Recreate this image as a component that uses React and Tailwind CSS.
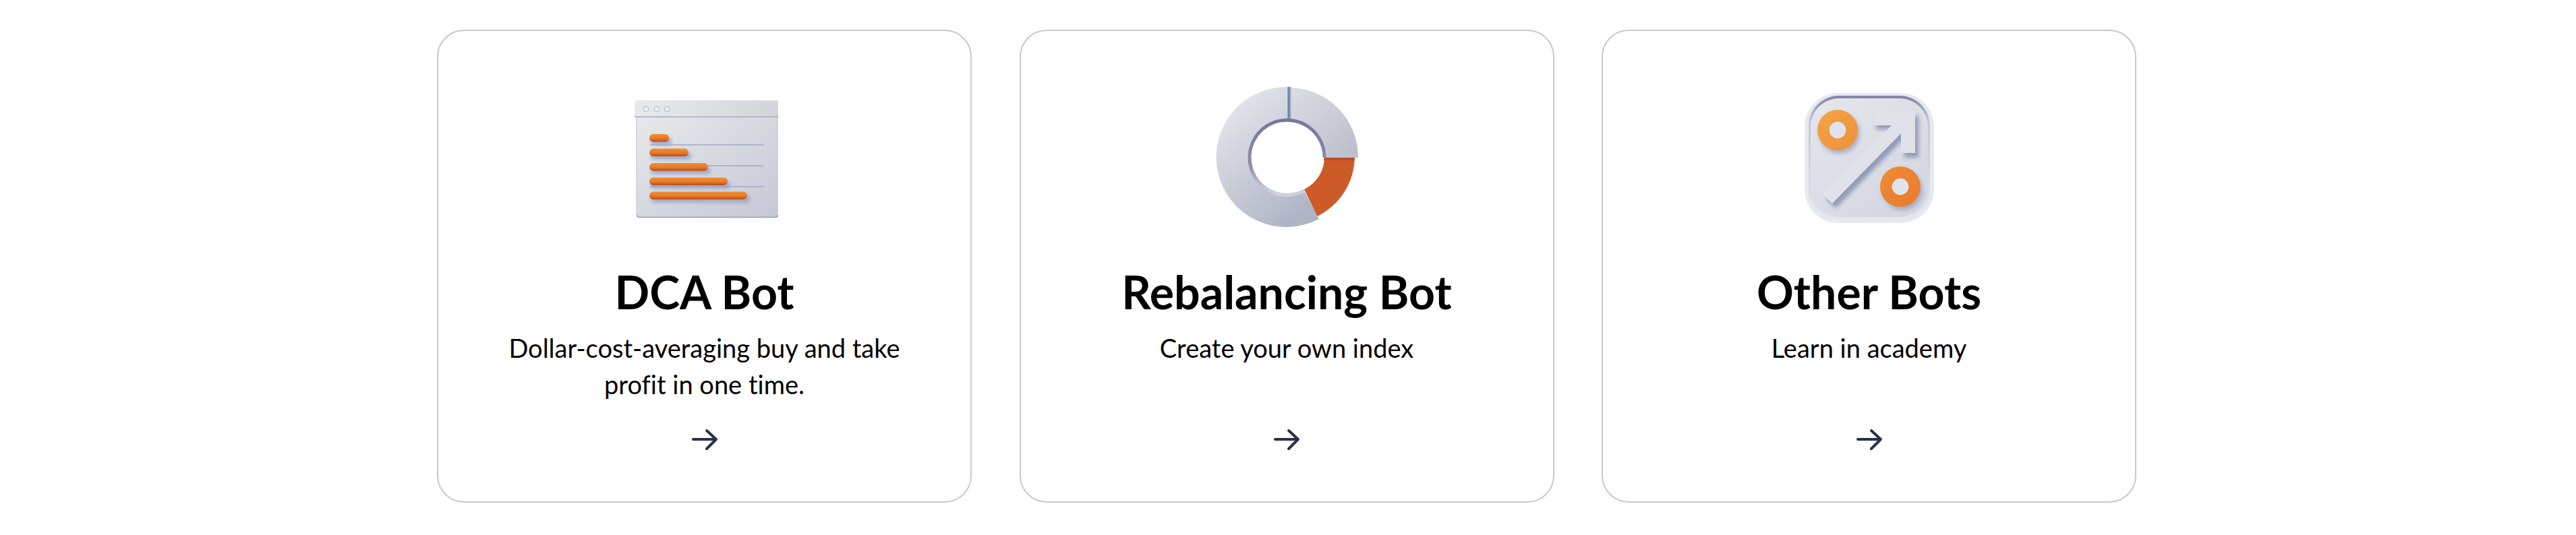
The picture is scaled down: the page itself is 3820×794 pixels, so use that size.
const BAR_ENDS = [
  { y: 85, end: 67 },
  { y: 106.5, end: 96 },
  { y: 128, end: 125 },
  { y: 149.5, end: 154 },
  { y: 170.5, end: 183 },
];

const WindowArt = () => (
  <svg width="240" height="240" viewBox="0 0 240 240">
    <defs>
      <linearGradient id="winBody" x1="0" y1="0" x2="1" y2="1">
        <stop offset="0" stopColor="#e8e9eb" />
        <stop offset="1" stopColor="#c4c8d5" />
      </linearGradient>
      <linearGradient id="winTop" x1="0" y1="0" x2="1" y2="0">
        <stop offset="0" stopColor="#e9eaec" />
        <stop offset="1" stopColor="#d3d5db" />
      </linearGradient>
      <linearGradient id="barFill" x1="0" y1="0" x2="0" y2="1">
        <stop offset="0" stopColor="#ee8f32" />
        <stop offset="0.55" stopColor="#e97a28" />
        <stop offset="1" stopColor="#bb4a1a" />
      </linearGradient>
      <filter id="winBlur" x="-20%" y="-100%" width="140%" height="300%">
        <feGaussianBlur stdDeviation="2.5" />
      </filter>
    </defs>
    <path d="M19 59h209v146a4 4 0 0 1-4 4H23a4 4 0 0 1-4-4z" fill="url(#winBody)" />
    <path d="M19.5 205a4 4 0 0 0 4 3.5h201a4 4 0 0 0 4-3.5" fill="none" stroke="#8f9dbd" strokeWidth="1.6" />
    <path d="M19 59v146M228 59v146" stroke="#b9bfd2" strokeWidth="1" />
    <rect x="16" y="35" width="213" height="24" rx="3" fill="url(#winTop)" />
    <path d="M16.5 57.5a2 2 0 0 0 2 2h208a2 2 0 0 0 2-2" fill="none" stroke="#a3abc4" strokeWidth="1.4" />
    {[33, 49, 64].map((cx) => (
      <circle key={cx} cx={cx} cy="48" r="3.8" fill="#eeeff0" stroke="#b4b7c1" strokeWidth="1" />
    ))}
    {[101, 132, 163].map((y) => (
      <line key={y} x1="39" y1={y} x2="207" y2={y} stroke="#a1a9c5" strokeWidth="1.4" />
    ))}
    {BAR_ENDS.map((bar) => (
      <rect key={bar.y} x="40" y={bar.y + 5} width={bar.end - 36} height="11.5" rx="5" fill="#9aa6c6" opacity="0.85" filter="url(#winBlur)" />
    ))}
    {BAR_ENDS.map((bar) => (
      <rect key={bar.y} x="38" y={bar.y} width={bar.end - 38} height="11.5" rx="5.75" fill="url(#barFill)" />
    ))}
  </svg>
);

const DonutArt = () => (
  <svg width="240" height="240" viewBox="0 0 240 240">
    <defs>
      <linearGradient id="donutGray" x1="0.1" y1="0" x2="0.7" y2="1">
        <stop offset="0" stopColor="#e9eaee" />
        <stop offset="1" stopColor="#afb4c5" />
      </linearGradient>
      <linearGradient id="donutRight" x1="0" y1="0" x2="1" y2="1">
        <stop offset="0" stopColor="#dcdee3" />
        <stop offset="1" stopColor="#b9bdcc" />
      </linearGradient>
      <linearGradient id="donutRing" x1="0" y1="0" x2="0" y2="1">
        <stop offset="0" stopColor="#74789f" />
        <stop offset="0.6" stopColor="#8c8eae" />
        <stop offset="1" stopColor="#d3d4e2" />
      </linearGradient>
      <linearGradient id="donutCut" x1="0" y1="0" x2="1" y2="0">
        <stop offset="0" stopColor="#5f7aa8" />
        <stop offset="0.45" stopColor="#7f93b7" />
        <stop offset="1" stopColor="#dcdee3" stopOpacity="0" />
      </linearGradient>
    </defs>
    <path d="M122 15 L122 66 A54.5 54.5 0 1 0 146 169 L168 211 A104 104 0 1 1 122 15 Z" fill="url(#donutGray)" />
    <path d="M123 16 A103 103 0 0 1 226 120 L176 120 A55 55 0 0 0 123 65 Z" fill="url(#donutRight)" />
    <path d="M176 120 L221 120 A100 100 0 0 1 165.5 207 L146 167 A53.5 53.5 0 0 0 176 120 Z" fill="#cc5b28" />
    <path d="M176 120 L221 120 L220.6 124 L175 124 Z" fill="#bd4c22" />
    <rect x="121.5" y="15" width="7" height="50" fill="url(#donutCut)" />
    <path d="M176 120 A55.5 55.5 0 1 0 146 169" fill="none" stroke="url(#donutRing)" strokeWidth="5" />
  </svg>
);

const PercentRing = ({ cx, cy, fill }) => {
  const ring = (x, y) =>
    `M${x - 30} ${y}a30 30 0 1 0 60 0a30 30 0 1 0-60 0zM${x - 12.5} ${y}a12.5 12.5 0 1 1 25 0a12.5 12.5 0 1 1-25 0z`;
  return (
    <g>
      <circle cx={cx + 3} cy={cy + 5} r="30" fill="#929cbb" opacity="0.7" filter="url(#pctBlur)" />
      <circle cx={cx} cy={cy} r="12.5" fill="#e1e3ea" />
      <path fillRule="evenodd" d={ring(cx, cy)} fill={fill} />
    </g>
  );
};

const PercentArt = () => (
  <svg width="240" height="240" viewBox="0 0 240 240">
    <defs>
      <linearGradient id="pctBase" x1="0.1" y1="0" x2="0.9" y2="1">
        <stop offset="0" stopColor="#e4e6ec" />
        <stop offset="1" stopColor="#d3d6e0" />
      </linearGradient>
      <linearGradient id="pctEdge" x1="0" y1="0" x2="0" y2="1">
        <stop offset="0" stopColor="#7f85a3" />
        <stop offset="0.2" stopColor="#c3c7d6" />
        <stop offset="1" stopColor="#e5e7ee" />
      </linearGradient>
      <linearGradient id="pctRingA" x1="0" y1="0" x2="1" y2="1">
        <stop offset="0" stopColor="#f4a546" />
        <stop offset="1" stopColor="#ee9038" />
      </linearGradient>
      <linearGradient id="pctRingB" x1="0" y1="0" x2="1" y2="1">
        <stop offset="0" stopColor="#f08a35" />
        <stop offset="1" stopColor="#e97b2d" />
      </linearGradient>
      <filter id="pctBlur" x="-30%" y="-30%" width="160%" height="160%">
        <feGaussianBlur stdDeviation="3" />
      </filter>
    </defs>
    <rect x="24" y="24" width="192" height="193" rx="50" fill="#e7e9f0" />
    <rect x="30" y="28" width="180" height="184" rx="45" fill="url(#pctEdge)" />
    <rect x="33" y="32" width="174" height="176" rx="42" fill="url(#pctBase)" />
    <path
      d="M193 58 L130 58 L130 78 L158 78 L56 181 L70 195 L172 91 L172 120 L193 120 Z"
      fill="#8d97b6"
      opacity="0.95"
      filter="url(#pctBlur)"
    />
    <path
      d="M188 52 L126 52 L126 72 L153 72 L51 174 L65 188 L167 84 L167 113 L188 113 Z"
      fill="#e0e2e9"
    />
    <PercentRing cx={73} cy={79} fill="url(#pctRingA)" />
    <PercentRing cx={166} cy={163} fill="url(#pctRingB)" />
  </svg>
);

const ArrowIcon = () => (
  <svg width="48" height="48" viewBox="0 0 48 48" fill="none">
    <path
      d="M7 24H40M27 11L41 24L27 38"
      stroke="#2a3048"
      strokeWidth="4"
      strokeLinecap="round"
      strokeLinejoin="round"
    />
  </svg>
);

const BOTS = [
  { title: "DCA Bot", text: "Dollar-cost-averaging buy and take profit in one time.", art: <WindowArt /> },
  { title: "Rebalancing Bot", text: "Create your own index", art: <DonutArt /> },
  { title: "Other Bots", text: "Learn in academy", art: <PercentArt /> },
];

export default function App() {
  return (
    <div className="h-[794px] bg-white pt-[44px] pl-[648px] font-['Lato',sans-serif] [font-variant-ligatures:none]">
      <div className="grid w-[2520px] grid-cols-3 gap-[70.5px]">
        {BOTS.map((bot) => (
          <div
            key={bot.title}
            className="flex h-[702px] flex-col items-center rounded-[40px] border-2 border-[#c5c9d6] bg-white pt-[68px]"
          >
            {bot.art}
            <h2 className="mt-[39px] text-[68px] leading-[80px] font-bold text-black">{bot.title}</h2>
            <p className="mt-[16px] h-[108px] w-[640px] text-center text-[38px] leading-[54px] text-black">{bot.text}</p>
            <div className="mt-[31px]">
              <ArrowIcon />
            </div>
          </div>
        ))}
      </div>
    </div>
  );
}
